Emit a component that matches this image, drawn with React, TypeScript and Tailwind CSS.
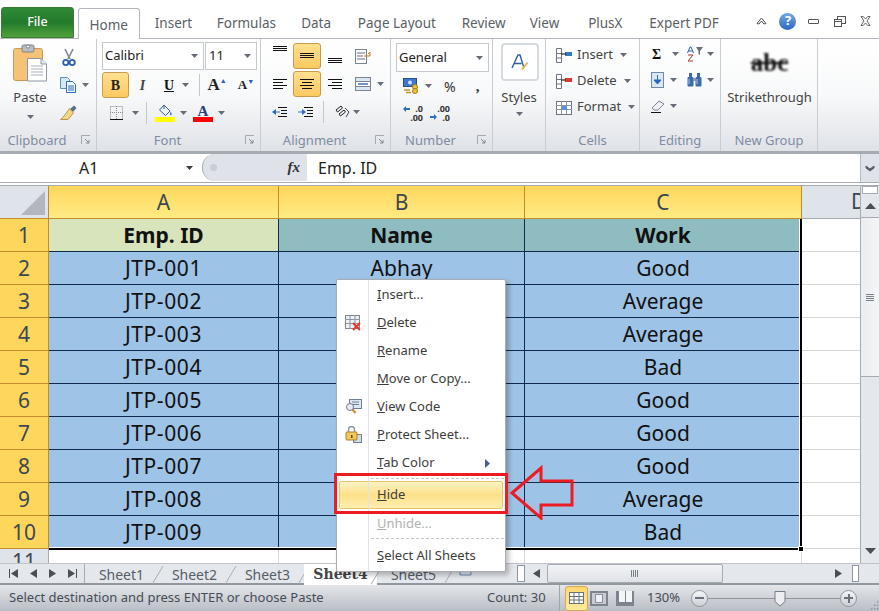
import type { ReactNode } from "react";

const rows = [
  ["JTP-001", "Abhay", "Good"],
  ["JTP-002", "", "Average"],
  ["JTP-003", "", "Average"],
  ["JTP-004", "", "Bad"],
  ["JTP-005", "", "Good"],
  ["JTP-006", "", "Good"],
  ["JTP-007", "", "Good"],
  ["JTP-008", "", "Average"],
  ["JTP-009", "", "Bad"],
];

const tabs = [
  { label: "Insert", w: "w-[68px]" },
  { label: "Formulas", w: "w-[78px]" },
  { label: "Data", w: "w-[62px]" },
  { label: "Page Layout", w: "w-[100px]" },
  { label: "Review", w: "w-[74px]" },
  { label: "View", w: "w-[48px]" },
  { label: "PlusX", w: "w-[74px]" },
  { label: "Expert PDF", w: "w-[84px]" },
];

function Caret({ dark }: { dark?: boolean }) {
  return (
    <svg width="7" height="4" viewBox="0 0 7 4" className="shrink-0">
      <path d="M0 0h7L3.5 4z" fill={dark ? "#3c3c3c" : "#666d78"} />
    </svg>
  );
}

function Launcher() {
  return (
    <svg width="10" height="10" viewBox="0 0 10 10" className="absolute right-[5px] top-[4px]">
      <path d="M0.5 9V0.5H9" stroke="#a3a9b2" fill="none" />
      <path d="M4 4l4 4M8 5v3H5" stroke="#7e8794" fill="none" />
    </svg>
  );
}

function Group({ w, label, launcher, children }: { w: string; label: string; launcher?: boolean; children: ReactNode }) {
  return (
    <div className={`${w} shrink-0 h-full flex flex-col border-r border-[#c9cdd3]`}>
      <div className="h-[92px] shrink-0">{children}</div>
      <div className={`relative h-[20px] flex items-center justify-center text-[13px] text-[#7f8ca1] ${launcher ? "pr-[22px]" : ""}`}>
        {label}
        {launcher && <Launcher />}
      </div>
    </div>
  );
}

function Sep() {
  return <div className="w-px h-[22px] bg-[#c4c8ce]" />;
}

// horizontal text-alignment glyph
function Lines({ rows: r }: { rows: number[][] }) {
  return (
    <svg width="16" height="14" viewBox="0 0 16 14">
      {r.map(([y, a, b]) => (
        <path key={y} d={`M${a} ${y + 0.5}H${b}`} stroke="#111" />
      ))}
    </svg>
  );
}

const Arrow = ({ left }: { left?: boolean }) => (
  <svg width="7" height="9" viewBox="0 0 7 9">
    <path d={left ? "M7 0v9L0 4.5z" : "M0 0v9l7-4.5z"} fill="#4a4f57" />
  </svg>
);

function HotBtn({ children, w }: { children: ReactNode; w: string }) {
  return (
    <div className={`${w} h-[26px] flex items-center justify-center rounded-[3px] border border-[#c79a4d] bg-gradient-to-b from-[#ffe08f] to-[#fdc95f]`}>
      {children}
    </div>
  );
}

function Menu() {
  const item = "h-[28px] flex items-center pl-[40px] text-[13px] text-[#3d3d3d]";
  const sep = "ml-[34px] mr-[1px] h-[1px] my-[0.5px] border-t border-dashed border-[#c5c5c5]";
  return (
    <div className="absolute left-[336px] top-[279px] w-[170px] h-[293px] z-10 bg-white border border-[#a9adb3] rounded-[2px] shadow-[3px_3px_5px_rgba(0,0,0,0.25)] pt-[1px]">
      <div className="absolute left-[31px] top-0 bottom-0 w-px bg-[#dfe3e8]" />
      <div className={item}>
        <u>I</u>nsert...
      </div>
      <div className={`${item} relative`}>
        <svg width="17" height="16" viewBox="0 0 17 16" className="absolute left-[8px] top-[6px]">
          <rect x="0.5" y="0.5" width="14" height="13" fill="#eef0f3" stroke="#7e8794" />
          <path d="M0 4.5h15M0 8.5h15M5 0v14M10 0v14" stroke="#8f97a3" />
          <path d="M8 8l7 7M15 8l-7 7" stroke="#e5392f" strokeWidth="2" />
        </svg>
        <u>D</u>elete
      </div>
      <div className={item}>
        <u>R</u>ename
      </div>
      <div className={item}>
        <u>M</u>ove or Copy...
      </div>
      <div className={`${item} relative`}>
        <svg width="17" height="15" viewBox="0 0 17 15" className="absolute left-[8px] top-[6px]">
          <rect x="4.5" y="0.5" width="12" height="9" fill="#dce6f2" stroke="#6f7f95" />
          <path d="M7 3h7M7 5.5h7" stroke="#6f7f95" />
          <circle cx="5" cy="8" r="3.5" fill="#e9eef4" stroke="#747c88" />
          <path d="M7.5 10.5l3 3.5" stroke="#c08a2e" strokeWidth="2" />
        </svg>
        <u>V</u>iew Code
      </div>
      <div className={`${item} relative`}>
        <svg width="17" height="17" viewBox="0 0 17 17" className="absolute left-[8px] top-[5px]">
          <rect x="8.5" y="8.5" width="8" height="8" fill="#cfdcee" stroke="#6f7f95" />
          <path d="M3.5 6V3.5a3 3 0 016 0V6" stroke="#8a8f98" strokeWidth="1.4" fill="none" />
          <rect x="1" y="6" width="11" height="8" rx="1" fill="#f0c75a" stroke="#a98228" />
          <rect x="6" y="9" width="1.5" height="3" fill="#5c4512" />
        </svg>
        <u>P</u>rotect Sheet...
      </div>
      <div className={`${item} justify-between pr-[15px]`}>
        <span>
          <u>T</u>ab Color
        </span>
        <svg width="5" height="9" viewBox="0 0 5 9">
          <path d="M0 0v9l5-4.5z" fill="#4a5f8f" />
        </svg>
      </div>
      <div className={sep} />
      <div className="mx-[2px] mt-[2px] h-[28px] flex items-center pl-[37px] text-[13px] text-[#3d3d3d] rounded-[2px] border border-[#e8c46a] bg-gradient-to-b from-[#fef3c4] via-[#fde08a] to-[#fdeeb0]">
        <span>
          <u>H</u>ide
        </span>
      </div>
      <div className={`${item} text-[#b1b1b1] mt-[1px]`}>
        <u>U</u>nhide...
      </div>
      <div className={sep} />
      <div className={`${item} mt-[3px]`}>
        <u>S</u>elect All Sheets
      </div>
    </div>
  );
}

function SheetTab({ label, active }: { label: string; active?: boolean }) {
  return (
    <div className={`relative w-[73px] h-[21px] flex items-center justify-center shrink-0 ${active ? "bg-white font-bold font-['DejaVu_Serif',serif] text-[14px] text-[#444]" : "text-[14px] text-[#555d68]"}`}>
      {label}
      <svg width="12" height="21" viewBox="0 0 12 21" className="absolute right-[-6px] top-0">
        <path d="M0 20.5L11 2" stroke="#a8aeb6" fill="none" />
      </svg>
    </div>
  );
}

export default function App() {
  return (
    <div className="relative w-[879px] h-[611px] overflow-hidden flex flex-col bg-white font-['Noto_Sans',sans-serif] text-[#333]">
      {/* tab strip */}
      <div className="h-[39px] shrink-0 flex items-end border-b border-[#b4b8be] text-[13.5px] text-[#5a5f66]">
        <div className="ml-[1px] w-[73px] h-[31px] flex items-center justify-center rounded-t-[3px] border border-[#3d7a35] bg-gradient-to-b from-[#2f8a36] via-[#227a2b] to-[#4fa13c] text-white text-[12.5px] font-medium">
          File
        </div>
        <div className="ml-[4px] w-[62px] h-[31px] mb-[-1px] pt-[2px] flex items-center justify-center rounded-t-[3px] border border-b-0 border-[#b4b8be] bg-white">
          Home
        </div>
        {tabs.map((t) => (
          <div key={t.label} className={`${t.w} h-[31px] pt-[2px] flex items-center justify-center`}>
            {t.label}
          </div>
        ))}
        <div className="ml-[23px] h-[31px] flex items-start">
          <div className="w-[26px] h-[28px] flex items-center justify-center">
            <svg width="11" height="8" viewBox="0 0 11 8">
              <path d="M1 6.5L5.5 1 10 6.5 8 7 5.5 4 3 7z" fill="#fff" stroke="#555" />
            </svg>
          </div>
          <div className="w-[26px] h-[28px] flex items-center justify-center">
            <div className="w-[17px] h-[17px] rounded-full bg-gradient-to-b from-[#74a8e4] to-[#2a68c0] text-white text-[13px] font-bold flex items-center justify-center">?</div>
          </div>
          <div className="w-[26px] h-[28px] flex items-center justify-center">
            <div className="w-[11px] h-[5px] border border-[#555] rounded-[1px]" />
          </div>
          <div className="w-[26px] h-[28px] flex items-center justify-center">
            <svg width="12" height="11" viewBox="0 0 12 11">
              <rect x="3.5" y="0.5" width="8" height="7" fill="#fff" stroke="#555" />
              <rect x="0.5" y="3.5" width="7" height="7" fill="#fff" stroke="#555" />
              <path d="M1 5.5h6" stroke="#555" />
            </svg>
          </div>
          <div className="w-[26px] h-[28px] flex items-center justify-center">
            <svg width="11" height="10" viewBox="0 0 11 10">
              <path d="M1 0.5h2.2L5.5 3 7.8 0.5H10L7 5l3 4.5H7.8L5.5 7 3.2 9.5H1L4 5z" fill="#fff" stroke="#555" strokeWidth="0.9" />
            </svg>
          </div>
        </div>
      </div>

      {/* ribbon */}
      <div className="h-[112px] shrink-0 flex bg-gradient-to-b from-white via-[#f8f9fa] to-[#dfe2e7]">
        <Group w="w-[97px]" label="Clipboard" launcher>
          <div className="flex h-full">
            <div className="w-[60px] flex flex-col items-center pt-[5px]">
              <svg width="34" height="38" viewBox="0 0 34 38">
                <rect x="0.5" y="4.5" width="29" height="32" rx="2" fill="#f4c375" stroke="#c99a55" />
                <rect x="9" y="1" width="12" height="7" rx="1.5" fill="#b9bdc4" stroke="#7c8087" />
                <circle cx="15" cy="2.5" r="1.6" fill="#fff" stroke="#7c8087" />
                <path d="M14.5 14.5H28l5.5 5.5v17h-19z" fill="#fff" stroke="#8d98a6" />
                <path d="M28 14.5V20h5.5" fill="#dfe6ee" stroke="#8d98a6" />
                <path d="M18 22h12M18 25h12M18 28h12M18 31h12" stroke="#a9b0ba" />
              </svg>
              <div className="mt-[3px] text-[13px] leading-[24px] text-[#444]">Paste</div>
              <div className="mt-[6px]">
                <Caret />
              </div>
            </div>
            <div className="flex flex-col pt-[5px]">
              <div className="h-[26px] pl-[2px] flex items-center">
                <svg width="14" height="19" viewBox="0 0 14 19">
                  <path d="M3 1l5 10M11 1L6 11" stroke="#7f8690" strokeWidth="1.6" />
                  <circle cx="3.8" cy="14.5" r="2.6" stroke="#2b5fb0" strokeWidth="1.8" fill="none" />
                  <circle cx="10.2" cy="14.5" r="2.6" stroke="#2b5fb0" strokeWidth="1.8" fill="none" />
                </svg>
              </div>
              <div className="h-[27px] flex items-center gap-[3px] mt-[1px]">
                <svg width="16" height="16" viewBox="0 0 16 16">
                  <path d="M0.5 0.5h7l2 2v9h-9z" fill="#d7e5f5" stroke="#5f8fc9" />
                  <path d="M6.5 4.5h6l3 3v8h-9z" fill="#f3f7fc" stroke="#2f6bb8" />
                  <path d="M8 9h6M8 11h6M8 13h6" stroke="#2f6bb8" />
                </svg>
                <span className="ml-[3px]">
                  <Caret />
                </span>
              </div>
              <div className="h-[28px] flex items-center">
                <svg width="17" height="15" viewBox="0 0 17 15">
                  <path d="M10 4l4-3.5 2.5 2.5L13 7z" fill="#5f6f88" />
                  <path d="M9.5 3.5L13.5 8 8 14.5H0.5C4 12 6 8 9.5 3.5z" fill="#f2d589" stroke="#b79744" />
                </svg>
              </div>
            </div>
          </div>
        </Group>

        <Group w="w-[164px]" label="Font" launcher>
          <div className="pl-[5px] pt-[3px]">
            <div className="flex h-[28px]">
              <div className="w-[102px] flex items-center justify-between pl-[2px] pr-[5px] border border-[#c4c9d0] bg-white text-[13px] text-[#222]">
                Calibri <Caret />
              </div>
              <div className="ml-px w-[52px] flex items-center justify-between pl-[3px] pr-[5px] border border-[#c4c9d0] bg-white text-[13px] text-[#222]">
                11 <Caret />
              </div>
            </div>
            <div className="flex h-[26px] mt-[2px] items-center">
              <HotBtn w="w-[27px]">
                <span className="font-['Liberation_Serif',serif] font-bold text-[14px] text-[#222]">B</span>
              </HotBtn>
              <div className="w-[27px] text-center font-['Liberation_Serif',serif] italic font-bold text-[14px] text-[#444]">I</div>
              <div className="w-[26px] text-center font-['Liberation_Serif',serif] underline font-bold text-[14px] text-[#111]">U</div>
              <div className="w-[10px]">
                <Caret />
              </div>
              <div className="ml-[7px]">
                <Sep />
              </div>
              <div className="w-[32px] ml-[1px] text-center font-['Liberation_Serif',serif] font-bold text-[17px] text-[#222]">
                A<span className="align-super text-[7px] text-[#2b5fb0]">▲</span>
              </div>
              <div className="w-[26px] text-center font-['Liberation_Serif',serif] font-bold text-[13px] text-[#222]">
                A<span className="align-super text-[7px] text-[#2b5fb0]">▼</span>
              </div>
            </div>
            <div className="flex h-[26px] mt-[2px] items-center">
              <svg width="13" height="14" viewBox="0 0 13 14" className="ml-[8px]">
                <path d="M0.5 0.5h12v13M0.5 0.5v13M6.5 0v13M0 6.5h13" stroke="#8b8b8b" strokeDasharray="1 1" fill="none" />
                <path d="M0 13.5h13" stroke="#111" />
              </svg>
              <span className="ml-[9px]">
                <Caret />
              </span>
              <div className="ml-[7px]">
                <Sep />
              </div>
              <div className="ml-[8px] flex flex-col items-center w-[20px]">
                <svg width="15" height="13" viewBox="0 0 15 13">
                  <path d="M6 1l6 6-4.5 4.5L1.5 6z" fill="#eef3fa" stroke="#3c5f94" />
                  <path d="M6 1V5" stroke="#3c5f94" />
                  <path d="M12.5 7.5c1 1.5 1.7 2.5 1 3.5-1 .8-2-.4-1.5-1.5z" fill="#3c7bd0" />
                </svg>
                <div className="w-[20px] h-[5px] bg-[#ffff00]" />
              </div>
              <span className="ml-[5px]">
                <Caret />
              </span>
              <div className="ml-[6px] flex flex-col items-center w-[20px]">
                <span className="h-[13px] leading-[14px] font-['Liberation_Serif',serif] font-bold text-[15px] text-[#24417c]">A</span>
                <div className="w-[20px] h-[5px] bg-[#ff0000]" />
              </div>
              <span className="ml-[5px]">
                <Caret />
              </span>
            </div>
          </div>
        </Group>

        <Group w="w-[130px]" label="Alignment" launcher>
          <div className="pl-[11px] pt-[4px]">
            <div className="flex h-[26px] items-center">
              <div className="w-[21px] mb-[8px]">
                <Lines rows={[[1, 1, 15], [3, 1, 15], [5, 1, 15]]} />
              </div>
              <HotBtn w="w-[28px]">
                <Lines rows={[[4, 1, 15], [6, 1, 15], [8, 1, 15]]} />
              </HotBtn>
              <div className="w-[6px]" />
              <div className="w-[28px] mt-[6px]">
                <Lines rows={[[6, 1, 15], [8, 1, 15], [10, 1, 15]]} />
              </div>
              <svg width="16" height="15" viewBox="0 0 16 15">
                <rect x="0.5" y="0.5" width="11" height="14" fill="#fff" stroke="#7c8592" />
                <path d="M2 4h8M2 7h6M2 10h8" stroke="#69717c" />
                <path d="M9 7h6v-4M15 3l-2 2" stroke="#c47a1e" fill="none" />
              </svg>
            </div>
            <div className="flex h-[26px] mt-[2px] items-center">
              <div className="w-[21px]">
                <Lines rows={[[2, 1, 15], [5, 1, 11], [8, 1, 15], [11, 1, 11]]} />
              </div>
              <HotBtn w="w-[28px]">
                <Lines rows={[[2, 1, 15], [5, 3, 13], [8, 1, 15], [11, 3, 13]]} />
              </HotBtn>
              <div className="w-[6px]" />
              <div className="w-[28px]">
                <Lines rows={[[2, 1, 15], [5, 5, 15], [8, 1, 15], [11, 5, 15]]} />
              </div>
              <svg width="16" height="14" viewBox="0 0 16 14">
                <rect x="0.5" y="0.5" width="15" height="13" fill="#dbe6f3" stroke="#7c8592" />
                <rect x="0.5" y="4.5" width="15" height="5" fill="#fff" stroke="#7c8592" />
                <path d="M3 7h10" stroke="#2a5b9f" strokeWidth="1.3" />
              </svg>
              <span className="ml-[6px]">
                <Caret />
              </span>
            </div>
            <div className="flex h-[26px] mt-[2px] items-center">
              <svg width="16" height="13" viewBox="0 0 16 13" className="mr-[10px]">
                <path d="M6 1.5h9M9 4.5h6M9 7.5h6M6 10.5h9" stroke="#111" />
                <path d="M0 6l4-3v6z" fill="#2b6cc4" />
                <path d="M3 6h5" stroke="#2b6cc4" />
              </svg>
              <svg width="16" height="13" viewBox="0 0 16 13" className="mr-[9px]">
                <path d="M6 1.5h9M9 4.5h6M9 7.5h6M6 10.5h9" stroke="#111" />
                <path d="M8 6L4 3v6z" fill="#2b6cc4" />
                <path d="M0 6h5" stroke="#2b6cc4" />
              </svg>
              <Sep />
              <svg width="15" height="14" viewBox="0 0 15 14" className="ml-[11px] mr-[3px]">
                <path d="M1 5l5-4 1.5 2-5 4zM4 9l5-4 1.5 2-5 4z" fill="none" stroke="#222" />
                <path d="M10 3l4 4-3 5" stroke="#3b4b63" fill="none" />
              </svg>
              <Caret />
            </div>
          </div>
        </Group>

        <Group w="w-[102px]" label="Number" launcher>
          <div className="pl-[5px] pt-[4px]">
            <div className="w-[93px] h-[29px] flex items-center justify-between pl-[2px] pr-[5px] border border-[#c4c9d0] bg-white text-[13px] text-[#222]">
              General <Caret />
            </div>
            <div className="flex items-center h-[26px] mt-[1px] text-[#333]">
              <svg width="16" height="16" viewBox="0 0 16 16" className="ml-[7px]">
                <rect x="0.5" y="0.5" width="13" height="8" fill="#3f78c8" stroke="#2a4f8c" />
                <circle cx="7" cy="4.5" r="2" fill="#cfe0f5" />
                <circle cx="12" cy="9" r="2.5" fill="#f2c23d" stroke="#a87a12" />
                <circle cx="12" cy="13" r="2.5" fill="#f2c23d" stroke="#a87a12" />
                <path d="M1 12h6M3 14.5h5" stroke="#c9952a" strokeWidth="1.5" />
              </svg>
              <span className="ml-[6px]">
                <Caret />
              </span>
              <span className="ml-[12px] text-[14px]">%</span>
              <span className="ml-[20px] text-[15px] font-bold font-['Liberation_Serif',serif]">,</span>
            </div>
            <div className="flex items-center h-[26px] mt-[1px]">
              <div className="ml-[7px] flex items-center w-[20px]">
                <svg width="7" height="6" viewBox="0 0 7 6" className="mb-[8px] shrink-0">
                  <path d="M0 3l3-3v2h4v2H3v2z" fill="#2b6cc4" />
                </svg>
                <div className="flex-1 text-[9px] leading-[9px] font-bold text-right text-[#333]">
                  .0
                  <br />
                  .00
                </div>
              </div>
              <div className="ml-[7px] flex items-center w-[20px]">
                <svg width="7" height="6" viewBox="0 0 7 6" className="mt-[8px] shrink-0">
                  <path d="M7 3L4 0v2H0v2h4v2z" fill="#2b6cc4" />
                </svg>
                <div className="flex-1 text-[9px] leading-[9px] font-bold text-right text-[#333]">
                  .00
                  <br />
                  .0
                </div>
              </div>
            </div>
          </div>
        </Group>

        <Group w="w-[53px]" label="">
          <div className="flex flex-col items-center pt-[4px]">
            <div className="ml-[1px] w-[38px] h-[38px] rounded-[4px] border-2 border-[#d6dbe2] bg-white flex items-center justify-center">
              <svg width="18" height="18" viewBox="0 0 18 18">
                <path d="M1 15L7 2h2l4 13M3.5 10.5h7" stroke="#2f5f9f" strokeWidth="1.4" fill="none" />
                <path d="M10 16l6-7 1.5 1-6 7z" fill="#e8b94a" />
              </svg>
            </div>
            <div className="text-[13px] leading-[20px] mt-[6px] text-[#444]">Styles</div>
            <div className="mt-[5px]">
              <Caret />
            </div>
          </div>
        </Group>

        <Group w="w-[94px]" label="Cells">
          <div className="pl-[10px] pt-[3px] text-[13px] text-[#444]">
            {[
              { label: "Insert", accent: "#2f7bc9" },
              { label: "Delete", accent: "#e5392f" },
            ].map((c) => (
              <div key={c.label} className="h-[26px] flex items-center">
                <svg width="16" height="15" viewBox="0 0 16 15" className="mr-[5px]">
                  <path d="M0.5 0.5h5v14h-5zM0.5 5.5h5M0.5 10h5" fill="#fff" stroke="#6c7480" />
                  <rect x="9" y="4" width="7" height="4" fill={c.accent} />
                  <path d="M5 6h5" stroke="#222" strokeWidth="1.2" />
                </svg>
                <span className="mr-[7px]">{c.label}</span>
                <Caret />
              </div>
            ))}
            <div className="h-[26px] flex items-center">
              <svg width="16" height="15" viewBox="0 0 16 15" className="mr-[5px]">
                <rect x="0.5" y="1.5" width="15" height="13" fill="#fff" stroke="#6c7480" />
                <path d="M0 5.5h16M0 9.5h16M5.5 1v13M10.5 1v13" stroke="#8f97a3" />
                <rect x="6" y="6" width="5" height="4" fill="#5b8fd6" />
              </svg>
              <span className="mr-[7px]">Format</span>
              <Caret />
            </div>
          </div>
        </Group>

        <Group w="w-[81px]" label="Editing">
          <div className="pl-[11px] pt-[2px]">
            <div className="flex items-center h-[26px]">
              <span className="w-[12px] font-['Liberation_Serif',serif] font-bold text-[14px] text-[#111] ml-[1px]">Σ</span>
              <span className="ml-[8px]">
                <Caret />
              </span>
              <svg width="16" height="16" viewBox="0 0 16 16" className="ml-[8px]">
                <path d="M9 1h7l-3 4v4l-1.5-1V5z" fill="#677080" />
                <path d="M0.5 7L3 1h1l2.5 6M1.5 5h4" stroke="#2b5fb0" fill="none" />
                <path d="M1 9h5L1 15h5" stroke="#a83a32" fill="none" />
              </svg>
              <span className="ml-[4px]">
                <Caret />
              </span>
            </div>
            <div className="flex items-center h-[26px]">
              <svg width="13" height="16" viewBox="0 0 13 16">
                <rect x="0.5" y="0.5" width="12" height="15" fill="#dce7f5" stroke="#6d89b0" />
                <path d="M6.5 3v7M3 8l3.5 4L10 8z" stroke="#2a66bb" fill="#2a66bb" />
              </svg>
              <span className="ml-[6px]">
                <Caret />
              </span>
              <svg width="15" height="14" viewBox="0 0 15 14" className="ml-[10px]">
                <rect x="2" y="0" width="3" height="4" fill="#3c6cb0" />
                <rect x="10" y="0" width="3" height="4" fill="#3c6cb0" />
                <rect x="0.5" y="4" width="6" height="9.5" rx="1" fill="#3c6cb0" />
                <rect x="8.5" y="4" width="6" height="9.5" rx="1" fill="#3c6cb0" />
                <rect x="6" y="5" width="3" height="3" fill="#8a97a8" />
                <path d="M2 6v5M10 6v5" stroke="#a9c6ec" />
              </svg>
              <span className="ml-[5px]">
                <Caret />
              </span>
            </div>
            <div className="flex items-center h-[26px]">
              <svg width="14" height="13" viewBox="0 0 14 13">
                <path d="M1 8L8 1l5 3-6 6H3z" fill="#eef0f4" stroke="#7b8797" />
                <path d="M0 12.5h10" stroke="#111" />
              </svg>
              <span className="ml-[5px]">
                <Caret />
              </span>
            </div>
          </div>
        </Group>

        <Group w="w-[97px]" label="New Group">
          <div className="flex flex-col items-center pt-[8px] pl-[1px]">
            <div className="h-[34px] font-['Liberation_Serif',serif] font-bold text-[25px] leading-[32px] text-[#111] line-through blur-[0.8px]">abc</div>
            <div className="mt-[6px] text-[13px] leading-[20px] text-[#444]">Strikethrough</div>
          </div>
        </Group>
      </div>
      <div className="h-[3px] shrink-0 bg-[#a6abb2]" />

      {/* formula bar */}
      <div className="h-[28px] shrink-0 flex bg-white">
        <div className="ml-[2px] w-[198px] flex items-center text-[16px] text-[#222]">
          <span className="ml-[77px] w-[107px]">A1</span>
          <Caret dark />
        </div>
        <div className="ml-[2px] w-[105px] h-[27px] flex items-center justify-between rounded-l-[13px] border-l border-[#a6abb2] bg-[#dfe3e9] pl-[7px] pr-[7px]">
          <div className="w-[7px] h-[7px] rounded-full bg-[#c8ccd3]" />
          <span className="font-['Liberation_Serif',serif] italic font-bold text-[15px] text-[#333]">fx</span>
        </div>
        <div className="flex-1 pl-[11px] flex items-center text-[16px] text-[#222]">Emp. ID</div>
        <div className="w-[19px] flex items-center justify-center bg-[#dfe3e9] border-l border-[#b9bdc4]">
          <svg width="10" height="7" viewBox="0 0 10 7">
            <path d="M1 1l4 3 4-3v2L5 6 1 3z" fill="#5a5f66" stroke="#5a5f66" />
          </svg>
        </div>
      </div>
      <div className="h-[4px] shrink-0 border-t border-b border-[#a6abb2]" />

      {/* sheet */}
      <div className="flex h-[377px] shrink-0">
        <div className="relative w-[861px] shrink-0 overflow-hidden grid grid-cols-[49px_230px_246px_277px_59px] grid-rows-[33px_repeat(10,33px)_14px] border-r border-[#a6abb2] text-[21px] text-[#111]">
          <div className="bg-[#dfe3ea] flex items-end justify-end p-[3px] border-r border-b border-[#c58a2c]">
            <svg width="24" height="24" viewBox="0 0 24 24">
              <path d="M24 0v24H0z" fill="#b3b7bd" />
            </svg>
          </div>
          {["A", "B", "C"].map((h) => (
            <div key={h} className="flex items-center justify-center pt-[2px] border-r border-b border-[#c58a2c] bg-gradient-to-b from-[#ffd65c] to-[#ffec83] text-[#3d4753]">
              {h}
            </div>
          ))}
          <div className="flex items-center justify-end bg-[#dfe3ea] border-b border-[#a6abb2] text-[#3d4753] pl-[51px] overflow-hidden">
            <span className="w-[10px]">D</span>
          </div>

          <div className="bg-[#ffd65c] border-r border-b border-[#c58a2c] flex items-center justify-center pt-[2px] text-[#3d4753]">1</div>
          <div className="bg-[#d8e4bc] border-r border-b border-[#0f2a4a] flex items-center justify-center pt-[2px] font-bold">Emp. ID</div>
          <div className="bg-[#8fbcc0] border-r border-b border-[#0f2a4a] flex items-center justify-center pt-[2px] font-bold">Name</div>
          <div className="bg-[#8fbcc0] border-r border-b border-[#0f2a4a] flex items-center justify-center pt-[2px] font-bold">Work</div>
          <div className="border-b border-[#d6d6d6]" />

          {rows.map((r, i) => (
            <div key={r[0]} className="contents">
              <div className="bg-[#ffd65c] border-r border-b border-[#c58a2c] flex items-center justify-center pt-[2px] text-[#3d4753]">{i + 2}</div>
              <div className="bg-[#9dc3e6] border-r border-b border-[#0f2a4a] flex items-center justify-center pt-[2px] tracking-[0.6px]">{r[0]}</div>
              <div className="bg-[#9dc3e6] border-r border-b border-[#0f2a4a] flex items-center justify-center pt-[2px]">{r[1]}</div>
              <div className="bg-[#9dc3e6] border-r border-b border-[#0f2a4a] flex items-center justify-center pt-[2px]">{r[2]}</div>
              <div className="border-b border-[#d6d6d6]" />
            </div>
          ))}

          <div className="bg-[#dfe3ea] border-r border-[#a6abb2] flex items-start justify-center text-[#3d4753] leading-[24px] overflow-hidden">11</div>
          <div className="border-r border-[#d6d6d6]" />
          <div className="border-r border-[#d6d6d6]" />
          <div className="border-r border-[#d6d6d6]" />
          <div />

          {/* selection outline */}
          <div className="absolute left-[49px] top-[33px] w-[753px] h-[331px] border-r-2 border-b-2 border-black">
            <div className="absolute right-0 bottom-0 top-0 w-px bg-white" />
            <div className="absolute left-0 right-0 bottom-0 h-px bg-white" />
            <div className="absolute right-[-4px] bottom-[-4px] w-[6px] h-[6px] bg-black border border-white" />
          </div>
        </div>

        {/* vertical scrollbar */}
        <div className="flex-1 flex flex-col bg-[#e4e7ec]">
          <div className="h-[8px] mx-[1px] border border-[#a6abb2] bg-white" />
          <div className="h-[24px] flex items-center justify-center border-b border-[#a6abb2]">
            <svg width="11" height="6" viewBox="0 0 11 6">
              <path d="M0 6L5.5 0 11 6z" fill="#4a4f57" />
            </svg>
          </div>
          <div className="h-[159px] flex items-center justify-center border-b border-[#a6abb2] bg-gradient-to-r from-[#e9ecf0] to-[#f4f5f7]">
            <svg width="8" height="7" viewBox="0 0 8 7">
              <path d="M0 .5h8M0 2.5h8M0 4.5h8M0 6.5h8" stroke="#7a808a" />
            </svg>
          </div>
          <div className="flex-1" />
          <div className="h-[24px] flex items-center justify-center">
            <svg width="11" height="6" viewBox="0 0 11 6">
              <path d="M0 0L5.5 6 11 0z" fill="#4a4f57" />
            </svg>
          </div>
        </div>
      </div>

      {/* sheet tabs + horizontal scrollbar */}
      <div className="h-[22px] shrink-0 flex border-t border-[#c0c4ca] border-b-[2px] border-b-[#9298a0] bg-[#e4e7ec]">
        <div className="w-[84px] flex items-center pl-[9px] gap-[12px] text-[#4a4f57]">
          <span className="flex items-center gap-[1px]">
            <span className="w-px h-[9px] bg-[#4a4f57]" />
            <Arrow left />
          </span>
          <Arrow left />
          <Arrow />
          <span className="flex items-center gap-[1px]">
            <Arrow />
            <span className="w-px h-[9px] bg-[#4a4f57]" />
          </span>
        </div>
        <div className="flex border-l border-[#a6abb2]">
          <SheetTab label="Sheet1" />
          <SheetTab label="Sheet2" />
          <SheetTab label="Sheet3" />
          <SheetTab label="Sheet4" active />
          <SheetTab label="Sheet5" />
        </div>
        <svg width="22" height="16" viewBox="0 0 22 16" className="ml-[6px]">
          <path d="M4 3h11v8H4z" fill="#dce6f2" stroke="#6d89b0" />
          <path d="M5 2h4M7 0v4" stroke="#d9732b" strokeWidth="1.4" />
        </svg>
        <div className="flex-1" />
        <div className="flex items-center w-[362px] shrink-0">
          <div className="w-[8px] h-[17px] border border-[#8f959d] bg-white" />
          <div className="w-[22px] flex justify-center">
            <Arrow left />
          </div>
          <div className="w-[176px] h-[19px] flex items-center justify-center rounded-[2px] border border-[#a6abb2] bg-gradient-to-b from-[#f1f3f5] to-[#dfe2e7]">
            <svg width="8" height="7" viewBox="0 0 8 7">
              <path d="M.5 0v7M2.5 0v7M4.5 0v7M6.5 0v7" stroke="#7a808a" />
            </svg>
          </div>
          <div className="flex-1 flex justify-end pr-[10px]">
            <Arrow />
          </div>
          <div className="w-[7px] h-[17px] border border-[#8f959d] bg-white" />
          <div className="w-[20px]" />
        </div>
      </div>

      {/* status bar */}
      <div className="h-[26px] shrink-0 flex items-center bg-gradient-to-b from-[#e4e6ea] to-[#b9bec5] text-[13px] text-[#464c55]">
        <span className="pl-[9px] w-[487px]">Select destination and press ENTER or choose Paste</span>
        <span className="w-[72px]">Count: 30</span>
        <div className="w-px h-[26px] bg-[#a0a5ac]" />
        <div className="ml-[5px] w-[23px] h-[25px] flex items-center justify-center rounded-[3px] border border-[#d9a94f] bg-gradient-to-b from-[#ffd76e] to-[#ffeb9c]">
          <svg width="15" height="12" viewBox="0 0 15 12">
            <rect x="0.5" y="0.5" width="14" height="11" fill="#fff" stroke="#6b7079" />
            <path d="M0 4.5h15M0 8h15M5 0v12M10 0v12" stroke="#6b7079" />
          </svg>
        </div>
        <div className="ml-[2px] w-[18px] h-[15px] border-2 border-[#7e848c] bg-[#c9cdd3] flex items-center justify-center">
          <div className="w-[8px] h-[9px] bg-[#eef0f3] border border-[#8b9098]" />
        </div>
        <div className="ml-[8px] w-[18px] h-[15px] bg-[#7e848c] flex justify-center gap-[1px] pb-[4px]">
          <div className="w-[6px] bg-[#f4f5f6]" />
          <div className="w-[6px] bg-[#f4f5f6]" />
        </div>
        <span className="ml-[13px] w-[41px]">130%</span>
        <div className="ml-[3px] w-[17px] h-[17px] rounded-full border border-[#8f959d] bg-gradient-to-b from-[#f5f6f8] to-[#ccd0d6] flex items-center justify-center">
          <div className="w-[9px] h-[2px] bg-[#6b7079]" />
        </div>
        <div className="relative w-[132px] h-px bg-[#8f959d]">
          <svg width="12" height="16" viewBox="0 0 12 16" className="absolute left-[66px] top-[-7px]">
            <path d="M1 .5h10v10L6 15 1 10.5z" fill="#eceef1" stroke="#777d86" />
          </svg>
        </div>
        <div className="w-[17px] h-[17px] rounded-full border border-[#8f959d] bg-gradient-to-b from-[#f5f6f8] to-[#ccd0d6] flex items-center justify-center relative">
          <div className="w-[9px] h-[2px] bg-[#6b7079]" />
          <div className="absolute w-[2px] h-[9px] bg-[#6b7079]" />
        </div>
        <svg width="10" height="10" viewBox="0 0 10 10" className="ml-auto self-end mb-[1px]">
          <path d="M8 1h1.5v1.5H8zM5 4.5h1.5V6H5zM8 4.5h1.5V6H8zM2 8h1.5v1.5H2zM5 8h1.5v1.5H5zM8 8h1.5v1.5H8z" fill="#8f959d" />
        </svg>
      </div>

      <Menu />

      {/* callout */}
      <div className="absolute left-[334px] top-[473px] w-[174px] h-[41px] z-20 border-[3px] border-[#ed1c24]" />
      <svg width="66" height="55" viewBox="0 0 66 55" className="absolute left-[509px] top-[465px] z-20">
        <path d="M3 28L32 3v13h31v24H32v13z" fill="none" stroke="#ed1c24" strokeWidth="3" />
      </svg>
    </div>
  );
}
